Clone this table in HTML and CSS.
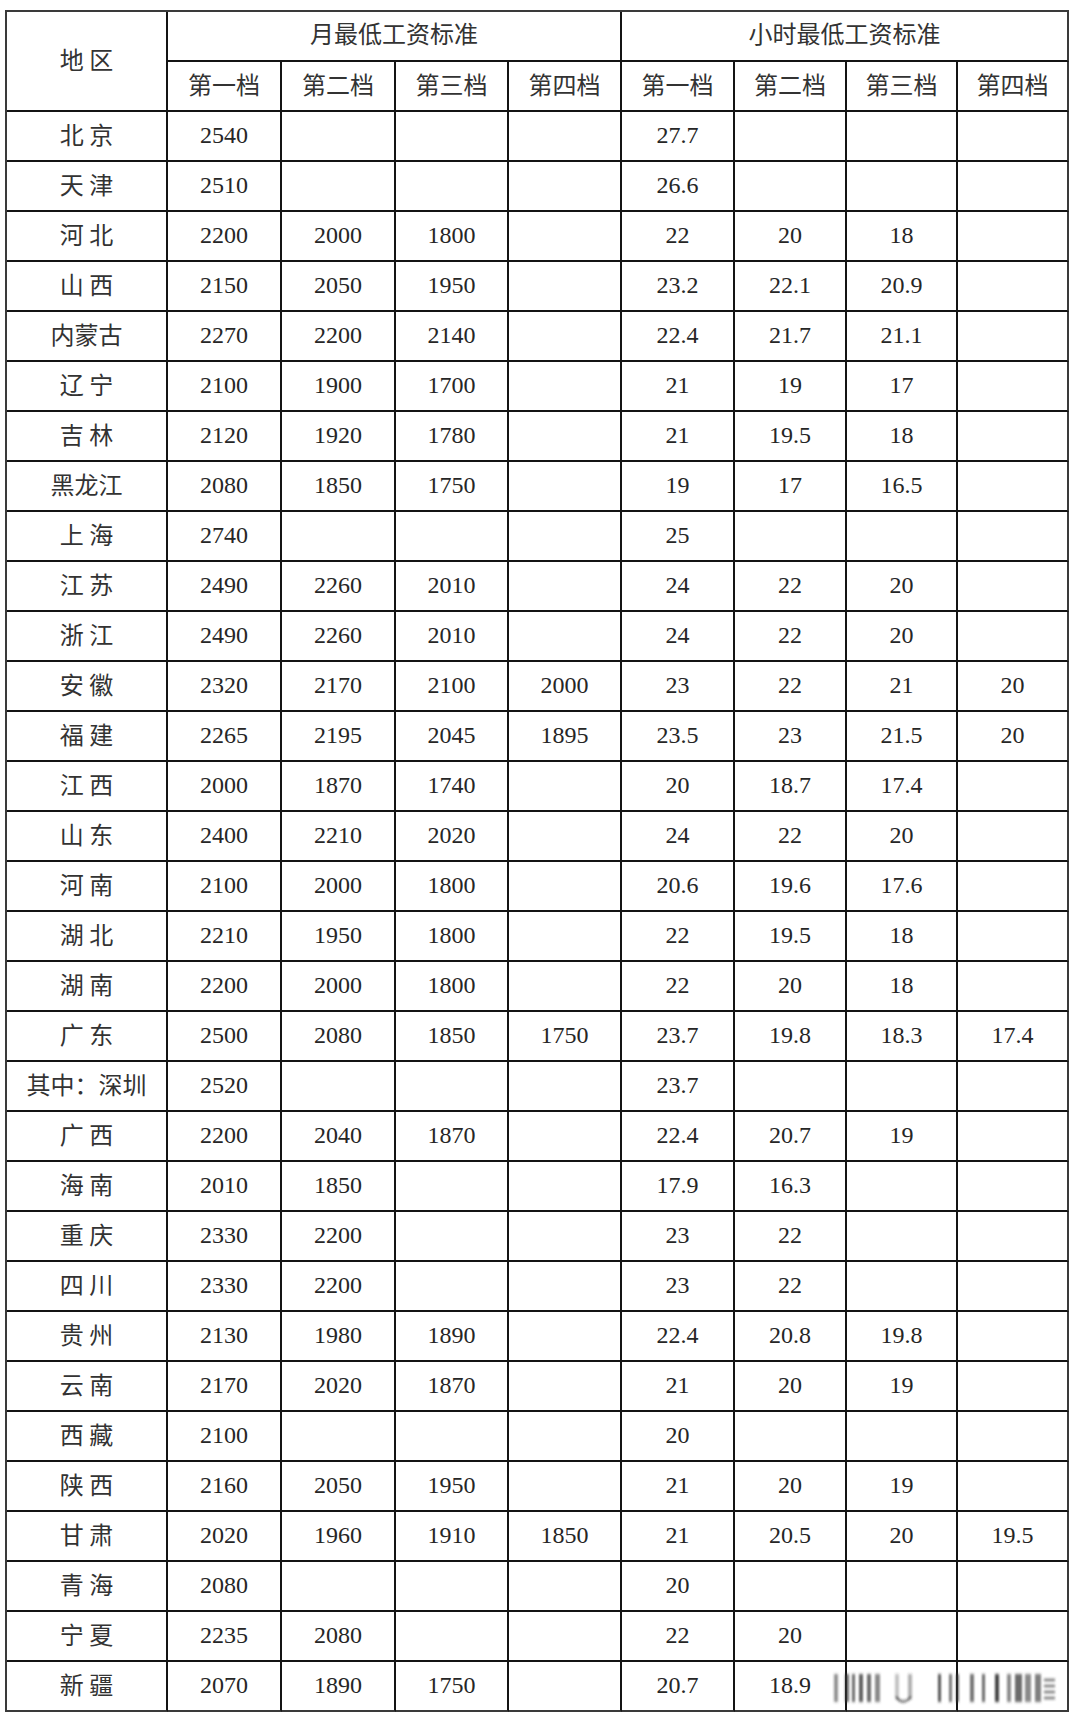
FILE: index.html
```html
<!DOCTYPE html>
<html lang="zh-CN">
<head>
<meta charset="utf-8">
<title>最低工资标准</title>
<link rel="stylesheet" href="styles.css">
</head>
<body>
<div class="sheet">
  <div class="head">
    <div class="c region">地 区</div>
    <div class="c group g1">月最低工资标准</div>
    <div class="c group g2">小时最低工资标准</div>
    <div class="c tier">第一档</div><div class="c tier">第二档</div><div class="c tier">第三档</div><div class="c tier">第四档</div>
    <div class="c tier">第一档</div><div class="c tier">第二档</div><div class="c tier">第三档</div><div class="c tier last">第四档</div>
  </div>
  <div class="row"><div class="c name">北 京</div><div class="c n">2540</div><div class="c n"></div><div class="c n"></div><div class="c n"></div><div class="c n">27.7</div><div class="c n"></div><div class="c n"></div><div class="c n"></div></div>
  <div class="row"><div class="c name">天 津</div><div class="c n">2510</div><div class="c n"></div><div class="c n"></div><div class="c n"></div><div class="c n">26.6</div><div class="c n"></div><div class="c n"></div><div class="c n"></div></div>
  <div class="row"><div class="c name">河 北</div><div class="c n">2200</div><div class="c n">2000</div><div class="c n">1800</div><div class="c n"></div><div class="c n">22</div><div class="c n">20</div><div class="c n">18</div><div class="c n"></div></div>
  <div class="row"><div class="c name">山 西</div><div class="c n">2150</div><div class="c n">2050</div><div class="c n">1950</div><div class="c n"></div><div class="c n">23.2</div><div class="c n">22.1</div><div class="c n">20.9</div><div class="c n"></div></div>
  <div class="row"><div class="c name">内蒙古</div><div class="c n">2270</div><div class="c n">2200</div><div class="c n">2140</div><div class="c n"></div><div class="c n">22.4</div><div class="c n">21.7</div><div class="c n">21.1</div><div class="c n"></div></div>
  <div class="row"><div class="c name">辽 宁</div><div class="c n">2100</div><div class="c n">1900</div><div class="c n">1700</div><div class="c n"></div><div class="c n">21</div><div class="c n">19</div><div class="c n">17</div><div class="c n"></div></div>
  <div class="row"><div class="c name">吉 林</div><div class="c n">2120</div><div class="c n">1920</div><div class="c n">1780</div><div class="c n"></div><div class="c n">21</div><div class="c n">19.5</div><div class="c n">18</div><div class="c n"></div></div>
  <div class="row"><div class="c name">黑龙江</div><div class="c n">2080</div><div class="c n">1850</div><div class="c n">1750</div><div class="c n"></div><div class="c n">19</div><div class="c n">17</div><div class="c n">16.5</div><div class="c n"></div></div>
  <div class="row"><div class="c name">上 海</div><div class="c n">2740</div><div class="c n"></div><div class="c n"></div><div class="c n"></div><div class="c n">25</div><div class="c n"></div><div class="c n"></div><div class="c n"></div></div>
  <div class="row"><div class="c name">江 苏</div><div class="c n">2490</div><div class="c n">2260</div><div class="c n">2010</div><div class="c n"></div><div class="c n">24</div><div class="c n">22</div><div class="c n">20</div><div class="c n"></div></div>
  <div class="row"><div class="c name">浙 江</div><div class="c n">2490</div><div class="c n">2260</div><div class="c n">2010</div><div class="c n"></div><div class="c n">24</div><div class="c n">22</div><div class="c n">20</div><div class="c n"></div></div>
  <div class="row"><div class="c name">安 徽</div><div class="c n">2320</div><div class="c n">2170</div><div class="c n">2100</div><div class="c n">2000</div><div class="c n">23</div><div class="c n">22</div><div class="c n">21</div><div class="c n">20</div></div>
  <div class="row"><div class="c name">福 建</div><div class="c n">2265</div><div class="c n">2195</div><div class="c n">2045</div><div class="c n">1895</div><div class="c n">23.5</div><div class="c n">23</div><div class="c n">21.5</div><div class="c n">20</div></div>
  <div class="row"><div class="c name">江 西</div><div class="c n">2000</div><div class="c n">1870</div><div class="c n">1740</div><div class="c n"></div><div class="c n">20</div><div class="c n">18.7</div><div class="c n">17.4</div><div class="c n"></div></div>
  <div class="row"><div class="c name">山 东</div><div class="c n">2400</div><div class="c n">2210</div><div class="c n">2020</div><div class="c n"></div><div class="c n">24</div><div class="c n">22</div><div class="c n">20</div><div class="c n"></div></div>
  <div class="row"><div class="c name">河 南</div><div class="c n">2100</div><div class="c n">2000</div><div class="c n">1800</div><div class="c n"></div><div class="c n">20.6</div><div class="c n">19.6</div><div class="c n">17.6</div><div class="c n"></div></div>
  <div class="row"><div class="c name">湖 北</div><div class="c n">2210</div><div class="c n">1950</div><div class="c n">1800</div><div class="c n"></div><div class="c n">22</div><div class="c n">19.5</div><div class="c n">18</div><div class="c n"></div></div>
  <div class="row"><div class="c name">湖 南</div><div class="c n">2200</div><div class="c n">2000</div><div class="c n">1800</div><div class="c n"></div><div class="c n">22</div><div class="c n">20</div><div class="c n">18</div><div class="c n"></div></div>
  <div class="row"><div class="c name">广 东</div><div class="c n">2500</div><div class="c n">2080</div><div class="c n">1850</div><div class="c n">1750</div><div class="c n">23.7</div><div class="c n">19.8</div><div class="c n">18.3</div><div class="c n">17.4</div></div>
  <div class="row"><div class="c name">其中：深圳</div><div class="c n">2520</div><div class="c n"></div><div class="c n"></div><div class="c n"></div><div class="c n">23.7</div><div class="c n"></div><div class="c n"></div><div class="c n"></div></div>
  <div class="row"><div class="c name">广 西</div><div class="c n">2200</div><div class="c n">2040</div><div class="c n">1870</div><div class="c n"></div><div class="c n">22.4</div><div class="c n">20.7</div><div class="c n">19</div><div class="c n"></div></div>
  <div class="row"><div class="c name">海 南</div><div class="c n">2010</div><div class="c n">1850</div><div class="c n"></div><div class="c n"></div><div class="c n">17.9</div><div class="c n">16.3</div><div class="c n"></div><div class="c n"></div></div>
  <div class="row"><div class="c name">重 庆</div><div class="c n">2330</div><div class="c n">2200</div><div class="c n"></div><div class="c n"></div><div class="c n">23</div><div class="c n">22</div><div class="c n"></div><div class="c n"></div></div>
  <div class="row"><div class="c name">四 川</div><div class="c n">2330</div><div class="c n">2200</div><div class="c n"></div><div class="c n"></div><div class="c n">23</div><div class="c n">22</div><div class="c n"></div><div class="c n"></div></div>
  <div class="row"><div class="c name">贵 州</div><div class="c n">2130</div><div class="c n">1980</div><div class="c n">1890</div><div class="c n"></div><div class="c n">22.4</div><div class="c n">20.8</div><div class="c n">19.8</div><div class="c n"></div></div>
  <div class="row"><div class="c name">云 南</div><div class="c n">2170</div><div class="c n">2020</div><div class="c n">1870</div><div class="c n"></div><div class="c n">21</div><div class="c n">20</div><div class="c n">19</div><div class="c n"></div></div>
  <div class="row"><div class="c name">西 藏</div><div class="c n">2100</div><div class="c n"></div><div class="c n"></div><div class="c n"></div><div class="c n">20</div><div class="c n"></div><div class="c n"></div><div class="c n"></div></div>
  <div class="row"><div class="c name">陕 西</div><div class="c n">2160</div><div class="c n">2050</div><div class="c n">1950</div><div class="c n"></div><div class="c n">21</div><div class="c n">20</div><div class="c n">19</div><div class="c n"></div></div>
  <div class="row"><div class="c name">甘 肃</div><div class="c n">2020</div><div class="c n">1960</div><div class="c n">1910</div><div class="c n">1850</div><div class="c n">21</div><div class="c n">20.5</div><div class="c n">20</div><div class="c n">19.5</div></div>
  <div class="row"><div class="c name">青 海</div><div class="c n">2080</div><div class="c n"></div><div class="c n"></div><div class="c n"></div><div class="c n">20</div><div class="c n"></div><div class="c n"></div><div class="c n"></div></div>
  <div class="row"><div class="c name">宁 夏</div><div class="c n">2235</div><div class="c n">2080</div><div class="c n"></div><div class="c n"></div><div class="c n">22</div><div class="c n">20</div><div class="c n"></div><div class="c n"></div></div>
  <div class="row"><div class="c name">新 疆</div><div class="c n">2070</div><div class="c n">1890</div><div class="c n">1750</div><div class="c n"></div><div class="c n">20.7</div><div class="c n">18.9</div><div class="c n"></div><div class="c n"></div></div>
  <svg class="mark" width="230" height="40" viewBox="0 0 230 40" aria-hidden="true">
    <defs><filter id="blur" x="-20%" y="-20%" width="140%" height="140%"><feGaussianBlur stdDeviation="1 1.5"/></filter></defs>
    <g filter="url(#blur)" fill="#3a3a3a">
      <rect x="2" y="7" width="4" height="28" opacity="0.55"/>
      <rect x="13" y="7" width="4" height="28" opacity="0.75"/>
      <rect x="20" y="7" width="3" height="28" opacity="0.75"/>
      <rect x="27" y="7" width="4" height="28" opacity="0.8"/>
      <rect x="35" y="7" width="4" height="28" opacity="0.75"/>
      <rect x="43" y="7" width="5" height="28" opacity="0.6"/>
      <rect x="63" y="7" width="4" height="25" opacity="0.3"/>
      <rect x="76" y="7" width="4" height="25" opacity="0.4"/>
      <path d="M64 30 Q71 39 79 30" stroke="#222" stroke-width="1.8" fill="none" opacity="0.9"/>
      <rect x="106" y="7" width="3" height="28" opacity="0.85"/>
      <rect x="117" y="7" width="3" height="28" opacity="0.7"/>
      <rect x="124" y="7" width="3" height="28" opacity="0.75"/>
      <rect x="138" y="7" width="4" height="28" opacity="0.7"/>
      <rect x="150" y="7" width="3" height="28" opacity="0.75"/>
      <rect x="163" y="7" width="4" height="28" opacity="0.95"/>
      <rect x="175" y="7" width="4" height="28" opacity="0.6"/>
      <rect x="183" y="7" width="7" height="28" opacity="0.75"/>
      <rect x="193" y="7" width="6" height="28" opacity="0.6"/>
      <rect x="203" y="7" width="6" height="28" opacity="0.65"/>
      <rect x="212" y="12" width="11" height="2" opacity="0.85"/>
      <rect x="212" y="18" width="11" height="2" opacity="0.85"/>
      <rect x="212" y="24" width="11" height="2" opacity="0.85"/>
      <rect x="212" y="30" width="11" height="2" opacity="0.85"/>
    </g>
  </svg>
</div>
</body>
</html>
```

FILE: styles.css
```css
html, body {
  margin: 0;
  padding: 0;
  background: #ffffff;
}

body {
  width: 1080px;
  height: 1725px;
  overflow: hidden;
}

.sheet {
  position: relative;
  margin: 10px 0 0 5px;
  width: 1064px;
  border-top: 2px solid #3a3a3a;
  border-left: 2px solid #3a3a3a;
  box-sizing: border-box;
}

.head,
.row {
  display: grid;
  grid-template-columns: 161px 114px 114px 113px 113px 113px 112px 111px 111px;
}

.head {
  grid-template-rows: 50px 50px;
}

.row {
  grid-template-rows: 50px;
}

.c {
  box-sizing: border-box;
  border-right: 2px solid #141414;
  border-bottom: 2px solid #141414;
  display: flex;
  align-items: center;
  justify-content: center;
  color: #2e2e2e;
  white-space: pre;
}

.region,
.group,
.tier,
.name {
  font-family: "Noto Sans CJK SC", "Noto Sans", sans-serif;
  font-size: 24px;
  font-weight: 400;
  color: #333333;
  padding-bottom: 6px;
}

.region {
  grid-column: 1;
  grid-row: 1 / 3;
}

.g1 {
  grid-column: 2 / 6;
  grid-row: 1;
  padding-bottom: 8px;
}

.g2 {
  grid-column: 6 / 10;
  grid-row: 1;
  border-right-color: #3a3a3a;
  padding-bottom: 8px;
}

.tier {
  grid-row: 2;
}

.tier.last,
.row .c:last-child {
  border-right-color: #3a3a3a;
}

.row:last-of-type .c {
  border-bottom-color: #3a3a3a;
}

.n {
  font-family: "Liberation Serif", "Times New Roman", serif;
  font-size: 24px;
  color: #262626;
  padding-bottom: 1px;
}

.mark {
  position: absolute;
  left: 825px;
  top: 1655px;
}
```
